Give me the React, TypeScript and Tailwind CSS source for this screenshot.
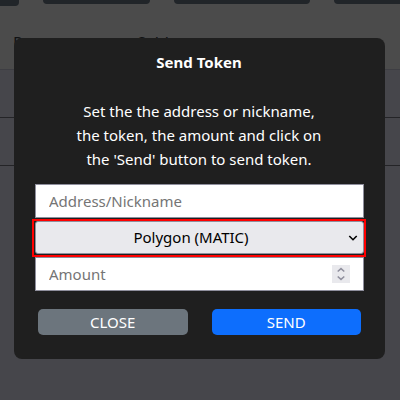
import React from "react";

function BackgroundPage() {
  return (
    <div aria-hidden="true" className="flex min-h-screen flex-col bg-[#46464b]">
      <div className="bg-[#4b4b4b]">
        <div className="flex h-[30px] items-start">
          <div className="h-[6px] w-[19px] rounded-br-[4px] bg-[#212529]" />
          <div className="ml-6 flex flex-1 gap-6">
            <div className="h-[4px] w-[107px] rounded-b-[4px] bg-[#212529]" />
            <div className="h-[4px] w-[136px] rounded-b-[4px] bg-[#212529]" />
            <div className="h-[4px] flex-1 rounded-bl-[4px] bg-[#212529]" />
          </div>
        </div>
        <div className="flex h-[39px] pt-px text-base text-[#111214]">
          <span className="w-[137px] pl-[13px]">Pos</span>
          <span>Saldo</span>
        </div>
      </div>
      <div className="h-12 border-t border-[#3e3e43]" />
      <div className="h-12 border-t border-[#242427]" />
      <div className="border-t border-[#242427]" />
    </div>
  );
}

export default function App() {
  return (
    <div className="relative min-h-screen overflow-hidden font-['Noto_Sans',sans-serif]">
      <BackgroundPage />
      <div className="absolute inset-0 px-[14px] pt-[38px]">
        <div
          role="dialog"
          aria-labelledby="dialog-title"
          className="mr-px rounded-lg bg-[#1f1f1f] pt-3 pr-[19px] pb-6 pl-[18px] text-center text-white"
        >
          <h2 id="dialog-title" className="text-[15px] leading-6 font-bold">
            Send Token
          </h2>
          <p className="mt-[25px] text-[15px] leading-6">
            Set the the address or nickname,
            <br />
            the token, the amount and click on
            <br />
            the 'Send' button to send token.
          </p>
          <form className="mt-[13px]" onSubmit={(event) => event.preventDefault()}>
            <div className="pr-[2px] pl-[3px]">
              <input
                type="text"
                aria-label="Address/Nickname"
                placeholder="Address/Nickname"
                className="block h-[34px] w-full border border-[#8f8f9d] bg-white px-[13px] text-[15px] text-black placeholder:text-[#757575]"
              />
            </div>
            <div className="relative mt-px border-2 border-[#ff0000] pb-px pl-px">
              <select
                aria-label="Token"
                className="block h-[33px] w-full appearance-none rounded-[3px] border border-[#8f8f9d] bg-[#e9e9ed] pr-[17px] text-center text-[15px] text-black [text-align-last:center]"
              >
                <option>Polygon (MATIC)</option>
              </select>
              <svg
                viewBox="0 0 10 6"
                fill="none"
                stroke="#000"
                strokeWidth="1.6"
                className="pointer-events-none absolute top-[14px] right-[6px] h-[6px] w-[10px]"
              >
                <path d="M1.3 1 L5 4.7 L8.7 1" />
              </svg>
            </div>
            <div className="relative pr-[2px] pl-[3px]">
              <input
                type="number"
                aria-label="Amount"
                placeholder="Amount"
                className="block h-[34px] w-full [appearance:textfield] border border-[#8f8f9d] bg-white px-[13px] text-[15px] text-black placeholder:text-[#757575]"
              />
              <svg
                viewBox="0 0 18 18"
                fill="none"
                stroke="#8f8f9d"
                strokeWidth="1.5"
                className="pointer-events-none absolute top-2 right-4 size-[18px] bg-[#e9e9ed]"
              >
                <path d="M5.7 6.5 L9 3.6 L12.3 6.5 M5.7 11.5 L9 14.4 L12.3 11.5" />
              </svg>
            </div>
            <div className="mt-[18px] flex gap-6 pr-[5px] pl-[6px] text-[15px] leading-[26px]">
              <button type="button" className="h-[26px] flex-1 rounded-[5px] bg-[#6c757d]">
                CLOSE
              </button>
              <button type="submit" className="h-[26px] flex-1 rounded-[5px] bg-[#0d6efd]">
                SEND
              </button>
            </div>
          </form>
        </div>
      </div>
    </div>
  );
}
